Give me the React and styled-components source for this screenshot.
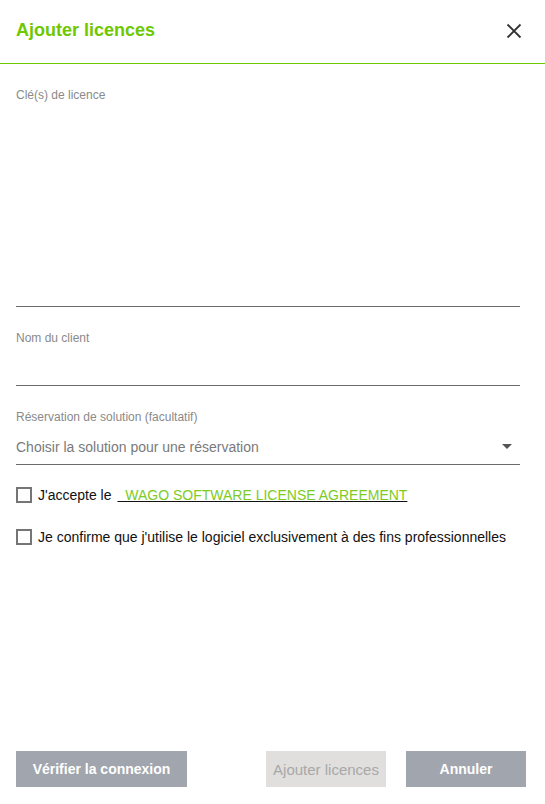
import React from 'react';
import styled, { createGlobalStyle } from 'styled-components';

const GlobalStyle = createGlobalStyle`
  html, body {
    margin: 0;
    padding: 0;
    background: #fff;
    font-family: "Liberation Sans", Arial, sans-serif;
  }
`;

const Dialog = styled.div`
  width: 545px;
  height: 804px;
  display: flex;
  flex-direction: column;
  background: #fff;
`;

const Header = styled.div`
  height: 64px;
  box-sizing: border-box;
  display: flex;
  align-items: center;
  justify-content: space-between;
  padding: 0 22px 2px 16px;
  border-bottom: 1px solid #6ec800;
`;

const Title = styled.h1`
  margin: 0;
  font-size: 18px;
  font-weight: bold;
  color: #6ec800;
`;

const CloseButton = styled.button`
  border: 0;
  background: none;
  padding: 0;
  width: 18px;
  height: 18px;
  display: flex;
  align-items: center;
  justify-content: center;
  cursor: pointer;
`;

const Body = styled.div`
  flex: 1;
  padding: 24px 25px 0 16px;
`;

const Field = styled.div`
  margin-bottom: ${(p) => (p.$last ? 0 : 24)}px;
`;

const Label = styled.label`
  display: block;
  font-size: 12px;
  line-height: 14px;
  color: #8a8a8a;
`;

const TextArea = styled.textarea`
  display: block;
  width: 100%;
  height: 205px;
  box-sizing: border-box;
  border: 0;
  border-bottom: 1px solid #6b6b6b;
  resize: none;
  outline: none;
  font-family: inherit;
  font-size: 14px;
`;

const Input = styled.input`
  display: block;
  width: 100%;
  height: 41px;
  box-sizing: border-box;
  border: 0;
  border-bottom: 1px solid #6b6b6b;
  outline: none;
  font-family: inherit;
  font-size: 14px;
`;

const Select = styled.div`
  height: 41px;
  box-sizing: border-box;
  border-bottom: 1px solid #6b6b6b;
  display: flex;
  align-items: center;
  justify-content: space-between;
  padding: 5px 8px 0 0;
  font-size: 14px;
  color: #7a7a7a;
`;

const Caret = styled.span`
  width: 0;
  height: 0;
  border-left: 5px solid transparent;
  border-right: 5px solid transparent;
  border-top: 5px solid #555;
`;

const CheckRow = styled.label`
  display: flex;
  align-items: center;
  height: 24px;
  margin-top: 18px;
  font-size: 14px;
  color: #111;
`;

const Box = styled.span`
  width: 16px;
  height: 16px;
  box-sizing: border-box;
  border: 2px solid #757575;
  margin-right: 6px;
  flex-shrink: 0;
`;

const Link = styled.a`
  color: #7ccb1f;
  text-decoration: underline;
  text-decoration-color: #111;
  margin-left: 6px;
  white-space: pre;
`;

const Footer = styled.div`
  display: flex;
  align-items: center;
  padding: 0 19px 17px 16px;
`;

const Button = styled.button`
  height: 36px;
  width: ${(p) => p.$width}px;
  margin-left: ${(p) => p.$left || 0}px;
  border: 0;
  background: ${(p) => (p.$disabled ? '#e0dfdd' : '#a1a5ad')};
  color: ${(p) => (p.$disabled ? '#a8a8a8' : '#fff')};
  font-family: inherit;
  font-size: ${(p) => (p.$disabled ? 15 : 14)}px;
  font-weight: ${(p) => (p.$disabled ? 'normal' : 'bold')};
  padding: 0;
  cursor: ${(p) => (p.$disabled ? 'default' : 'pointer')};
`;

export default function App() {
  return (
    <>
      <GlobalStyle />
      <Dialog>
        <Header>
          <Title>Ajouter licences</Title>
          <CloseButton aria-label="Fermer">
            <svg width="16" height="16" viewBox="0 0 16 16">
              <path d="M1.5 1.5 L14.5 14.5 M14.5 1.5 L1.5 14.5" stroke="#333" strokeWidth="1.8" fill="none" />
            </svg>
          </CloseButton>
        </Header>
        <Body>
          <Field>
            <Label>Clé(s) de licence</Label>
            <TextArea />
          </Field>
          <Field>
            <Label>Nom du client</Label>
            <Input />
          </Field>
          <Field $last>
            <Label>Réservation de solution (facultatif)</Label>
            <Select>
              <span>Choisir la solution pour une réservation</span>
              <Caret />
            </Select>
          </Field>
          <CheckRow>
            <Box />
            J'accepte le
            <Link href="#">  WAGO SOFTWARE LICENSE AGREEMENT</Link>
          </CheckRow>
          <CheckRow>
            <Box />
            Je confirme que j'utilise le logiciel exclusivement à des fins professionnelles
          </CheckRow>
        </Body>
        <Footer>
          <Button $width={171}>Vérifier la connexion</Button>
          <Button $width={120} $left={79} $disabled>Ajouter licences</Button>
          <Button $width={120} $left={20}>Annuler</Button>
        </Footer>
      </Dialog>
    </>
  );
}
